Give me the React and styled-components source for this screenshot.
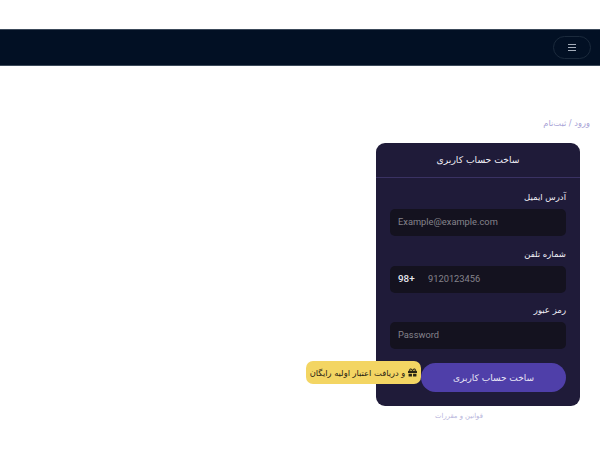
import styled, { createGlobalStyle } from "styled-components"
import { FaGift } from "react-icons/fa"

const Global = createGlobalStyle`
html, body {
  margin: 0;
  background: #fff;
  font-family: "DejaVu Sans", sans-serif;
}
* { box-sizing: border-box; }
`
const Page = styled.div`
width: 600px;
height: 450px;
overflow: hidden;
padding-top: 29px;
direction: rtl;
`
const Navbar = styled.header`
height: 37px;
background: #021024;
border-top: 1px solid #3c4a5a;
border-bottom: 1px solid #3c4a5a;
display: flex;
align-items: center;
padding-right: 9px;
`
const MenuButton = styled.button`
width: 38px;
height: 23px;
border-radius: 12px;
border: 1px solid #1b2a3c;
background: transparent;
padding: 0;
display: flex;
align-items: center;
justify-content: center;
`
const Breadcrumb = styled.div`
margin-top: 51px;
padding-right: 10px;
font-size: 8.3px;
line-height: 12px;
color: #a9a4d6;
`
const Card = styled.section`
position: relative;
width: 204px;
height: 263px;
margin: 14px 20px 0 0;
background: #1f1b39;
border-radius: 9px;
`
const CardHeader = styled.div`
height: 35px;
padding-bottom: 2px;
border-bottom: 1px solid #3a3263;
display: flex;
align-items: center;
justify-content: center;
color: #f2f1f8;
font-size: 9.2px;
`
const Form = styled.form`
padding: 13px 14px 0;
display: flex;
flex-direction: column;
`
const Label = styled.label`
font-size: 8.5px;
line-height: 12px;
color: #f0eff6;
margin-bottom: 6px;
`
const Field = styled.div`
height: 27px;
margin-bottom: ${p => p.$gap}px;
padding-bottom: 2px;
background: #14121f;
border-radius: 5px;
direction: ltr;
display: flex;
align-items: center;
padding-left: 8px;
font-family: Roboto, sans-serif;
font-size: 9.3px;
color: #85838c;
`
const Prefix = styled.span`
width: 30px;
color: #e8e7ee;
font-size: 9.8px;
font-weight: 500;
`
const SubmitButton = styled.button`
height: 29px;
margin-top: 14px;
width: 145px;
align-self: flex-start;
border: none;
border-radius: 15px;
background: #4f3fa9;
color: #e9e7f6;
font-family: "DejaVu Sans", sans-serif;
font-size: 9px;
`
const Promo = styled.div`
position: absolute;
left: -70px;
top: 218px;
width: 115px;
height: 23px;
background: #f3d563;
border-radius: 7px;
color: #2a2413;
font-size: 8.3px;
display: flex;
align-items: center;
justify-content: center;
gap: 3px;
white-space: nowrap;
`
const Terms = styled.div`
margin: 4px 39px 0 0;
width: 204px;
text-align: center;
font-size: 6.8px;
line-height: 12px;
color: #b9b6dc;
`

export default function App() {
  return (
    <Page>
      <Global />
      <Navbar>
        <MenuButton aria-label="menu">
          <svg width="8" height="7" viewBox="0 0 8 7">
            <path d="M0 .5h8M0 3.5h8M0 6.5h8" stroke="#a4adba" strokeWidth="1" />
          </svg>
        </MenuButton>
      </Navbar>
      <Breadcrumb>ورود / ثبت‌نام</Breadcrumb>
      <Card>
        <CardHeader>ساخت حساب کاربری</CardHeader>
        <Form>
          <Label>آدرس ایمیل</Label>
          <Field $gap={11.5}>Example@example.com</Field>
          <Label>شماره تلفن</Label>
          <Field $gap={11.5}><Prefix>98+</Prefix>9120123456</Field>
          <Label>رمز عبور</Label>
          <Field $gap={0}>Password</Field>
          <SubmitButton type="button">ساخت حساب کاربری</SubmitButton>
        </Form>
        <Promo>
          <FaGift size={9} color="#2a2413" />
          و دریافت اعتبار اولیه رایگان
        </Promo>
      </Card>
      <Terms>قوانین و مقررات</Terms>
    </Page>
  )
}
